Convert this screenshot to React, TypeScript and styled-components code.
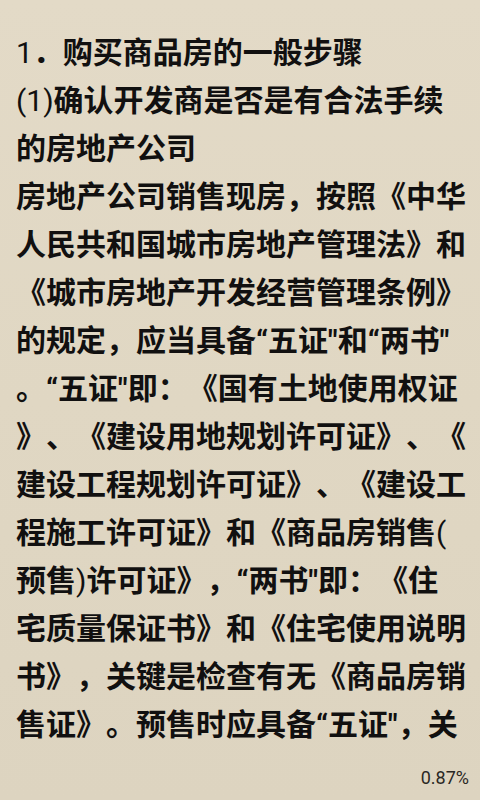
import React from 'react';
import styled, {createGlobalStyle} from "styled-components";

const lines: string[] = [
    '1．购买商品房的一般步骤',
    '(1)确认开发商是否是有合法手续',
    '的房地产公司',
    '房地产公司销售现房，按照《中华',
    '人民共和国城市房地产管理法》和',
    '《城市房地产开发经营管理条例》',
    '的规定，应当具备“五证"和“两书"',
    '。“五证"即：《国有土地使用权证',
    '》、《建设用地规划许可证》、《',
    '建设工程规划许可证》、《建设工',
    '程施工许可证》和《商品房销售(',
    '预售)许可证》，“两书"即：《住',
    '宅质量保证书》和《住宅使用说明',
    '书》，关键是检查有无《商品房销',
    '售证》。预售时应具备“五证"，关',
];

// digits and brackets are drawn lighter than the Chinese text
const splitRuns = (line: string) => line.split(/([0-9()]+)/).filter(Boolean);

const GlobalStyle = createGlobalStyle`
  html, body {
    margin: 0;
    padding: 0;
    background: #e1d8c5;
  }
`

export default function App() {
    return (
        <>
            <GlobalStyle/>
            <Page>
                <TextBlock>
                    {lines.map((line, i) => (
                        <Line key={i}>
                            {splitRuns(line).map((run, j) =>
                                /^[0-9()]+$/.test(run)
                                    ? <Latin key={j}>{run}</Latin>
                                    : <React.Fragment key={j}>{run}</React.Fragment>
                            )}
                        </Line>
                    ))}
                </TextBlock>
                <Footer>
                    <Progress>0.87%</Progress>
                </Footer>
            </Page>
        </>
    );
}

const Page = styled.div`
  width: 480px;
  height: 800px;
  display: flex;
  flex-direction: column;
  justify-content: space-between;
  background: linear-gradient(180deg, #e3dac7 0%, #e0d7c3 50%, #ddd4c0 100%);
  overflow: hidden;
`

const TextBlock = styled.div`
  padding: 29px 0 0 16px;
  display: flex;
  flex-direction: column;
`

const Line = styled.div`
  font-family: Roboto, "Noto Sans CJK SC", sans-serif;
  font-size: 30px;
  font-weight: 700;
  line-height: 48px;
  color: #111010;
  white-space: nowrap;
  text-spacing-trim: space-all;
`

const Latin = styled.span`
  font-weight: 400;
`

const Footer = styled.div`
  display: flex;
  justify-content: flex-end;
  padding: 0 11px 12px 0;
`

const Progress = styled.span`
  font-family: Roboto, "Liberation Sans", sans-serif;
  font-size: 18px;
  line-height: 20px;
  color: #2a2824;
`
